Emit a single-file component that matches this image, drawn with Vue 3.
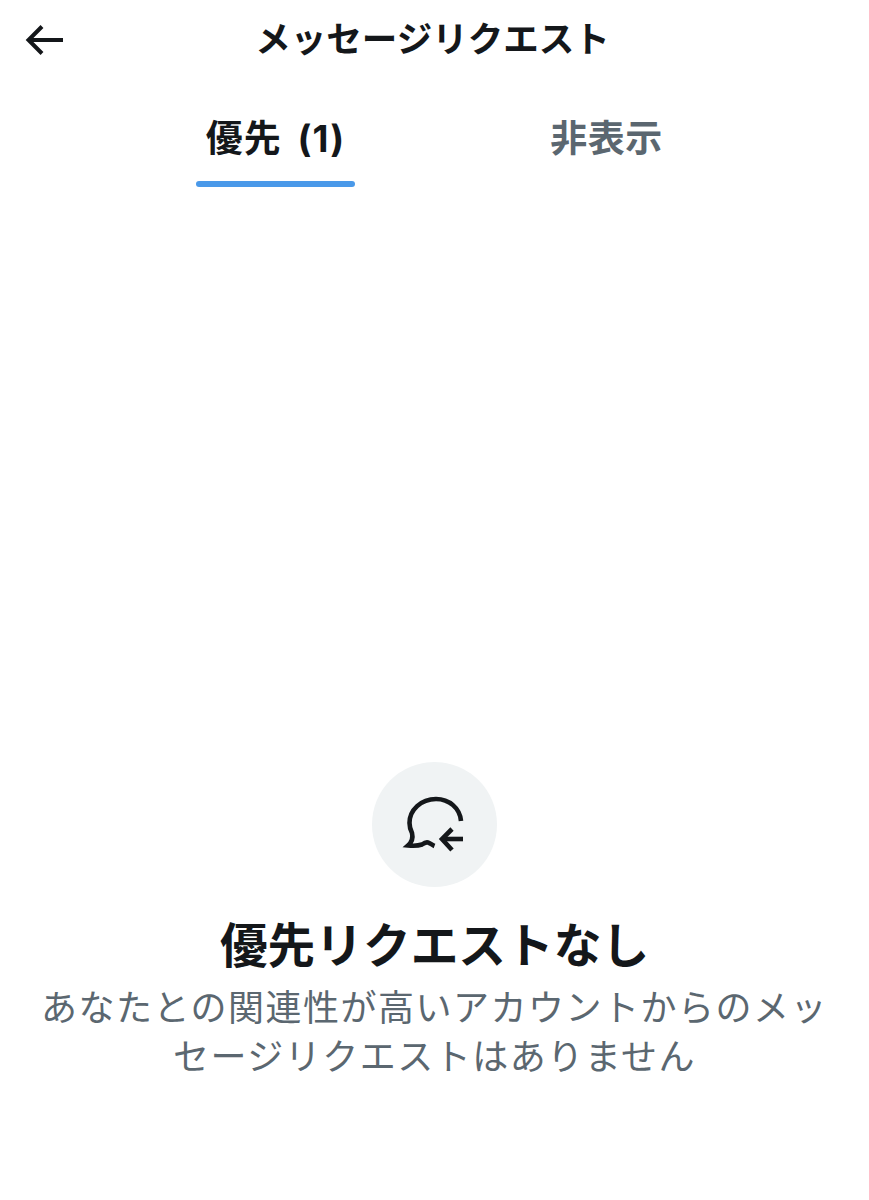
<template>
  <div class="screen">
    <header class="topbar">
      <button class="back" aria-label="戻る">
        <svg width="40" height="34" viewBox="0 0 40 34" fill="none" stroke="#14171a" stroke-width="4">
          <path d="M38 17H4" />
          <path d="M17 3.500L3.500 17L17 30.500" />
        </svg>
      </button>
      <h1 class="title">メッセージリクエスト</h1>
    </header>

    <nav class="tabs">
      <div v-for="tab in tabs" :key="tab.label" class="tab" :class="{ active: tab.active }">
        <span class="tab-label">{{ tab.label }}</span>
        <span v-if="tab.active" class="indicator"></span>
      </div>
    </nav>

    <section class="empty">
      <div class="icon-circle">
        <svg width="70" height="70" viewBox="0 0 70 70" fill="none" stroke="#14171a" stroke-width="4.600">
          <path d="M61 31C60 18 49 9 36 9C21 9 9.500 20 9.500 33C9.500 37 10.500 40 12 43C13 47 12 52 8 55.500C13 56 18 56 22 54.500C24 53 26 52 28 52.500C30 53 32 55 34.500 56" />
          <path d="M63 49H42" />
          <path d="M52 39L42 49L52 60" />
        </svg>
      </div>
      <h2 class="heading">優先リクエストなし</h2>
      <p class="desc">あなたとの関連性が高いアカウントからのメッセージリクエストはありません</p>
    </section>
  </div>
</template>

<script setup>
const tabs = [
  { label: '優先 (1)', active: true },
  { label: '非表示', active: false }
]
</script>

<style>
html,
body {
  background: #fff;
}
</style>

<style scoped>
.screen {
  width: 869px;
  height: 1200px;
  background: #fff;
  font-family: "Inter", "Noto Sans CJK JP", sans-serif;
  display: flex;
  flex-direction: column;
  overflow: hidden;
}

.topbar {
  position: relative;
  height: 80px;
  display: flex;
  align-items: center;
  justify-content: center;
  padding-right: 4px;
}

.back {
  position: absolute;
  left: 25px;
  top: 23px;
  padding: 0;
  border: 0;
  background: none;
  line-height: 0;
}

.title {
  margin: 0;
  font-size: 35.500px;
  line-height: 82px;
  font-weight: 700;
  color: #14171a;
}

.tabs {
  display: grid;
  grid-template-columns: 331px 331px;
  padding-left: 110px;
  height: 108px;
}

.tab {
  position: relative;
  display: flex;
  justify-content: center;
  padding-top: 33px;
  font-size: 37px;
  line-height: 52px;
  font-weight: 700;
  letter-spacing: 0.500px;
  color: #5b6770;
}

.tab.active {
  color: #14171a;
  word-spacing: 6px;
  letter-spacing: 1px;
}

.indicator {
  position: absolute;
  left: 86px;
  top: 101px;
  width: 159px;
  height: 6px;
  border-radius: 3px;
  background: #4a99e9;
}

.empty {
  display: flex;
  flex-direction: column;
  align-items: center;
  padding: 574px 40px 0;
}

.icon-circle {
  width: 125px;
  height: 125px;
  border-radius: 50%;
  background: #f0f3f4;
  display: flex;
  align-items: center;
  justify-content: center;
}

.heading {
  margin: 26px 0 0;
  font-size: 47.700px;
  line-height: 66px;
  font-weight: 700;
  color: #14171a;
}

.desc {
  margin: 5px 0 0;
  width: 800px;
  font-size: 36px;
  line-height: 49px;
  letter-spacing: 1.500px;
  text-align: center;
  color: #5b6770;
}
</style>
